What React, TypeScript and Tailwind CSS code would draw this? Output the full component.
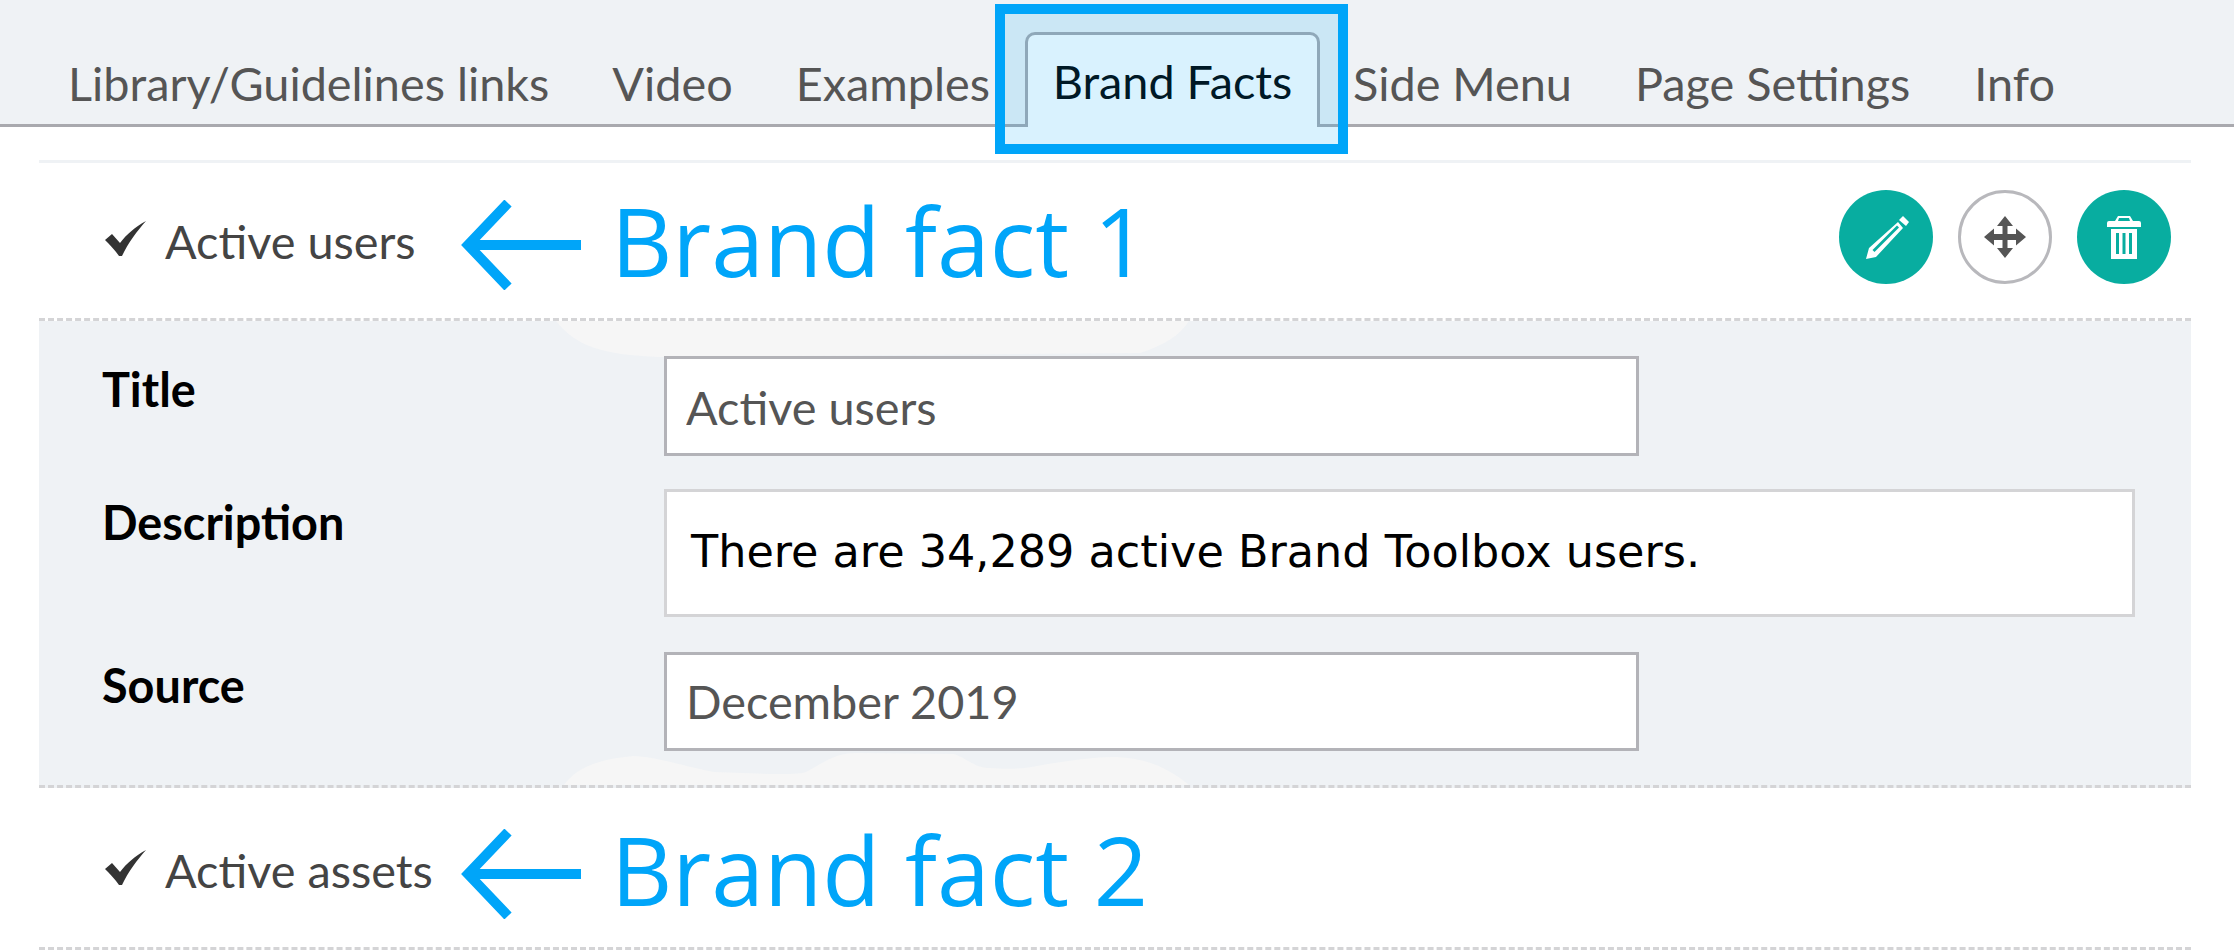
import type { ReactNode } from "react";

const leftTabs = [
  { label: "Library/Guidelines links", left: "ml-[68px]" },
  { label: "Video", left: "ml-[63px]" },
  { label: "Examples", left: "ml-[63px]" },
];

const rightTabs = [
  { label: "Side Menu", left: "ml-[33px]" },
  { label: "Page Settings", left: "ml-[63px]" },
  { label: "Info", left: "ml-[64px]" },
];

function BlueArrow() {
  return (
    <svg width="120" height="90" viewBox="0 0 120 90" className="shrink-0">
      <path d="M120 45H8" stroke="#00a5f9" strokeWidth="10" fill="none" />
      <path d="M47 3L7 45L47 87" stroke="#00a5f9" strokeWidth="10" fill="none" />
    </svg>
  );
}

function CheckMark() {
  return (
    <svg width="44" height="36" viewBox="0 0 44 36" className="mb-[4px] shrink-0" fill="#333">
      <path d="M2 19l7-6 8 9C24 13 32 6 43 0c-8 9-18 22-24 35h-3C12 29 7 24 2 19z" />
    </svg>
  );
}

function FactRow({ title, note, offset, children }: { title: string; note: string; offset: string; children?: ReactNode }) {
  return (
    <div className={`flex items-center pl-[64px] pr-[20px] ${offset}`}>
      <CheckMark />
      <span className="ml-[18px] w-[296px] pt-[2px] text-[46.8px] leading-none text-[#444]">{title}</span>
      <div className="mt-[8px]">
        <BlueArrow />
      </div>
      <span className="ml-[30px] font-['Open_Sans',sans-serif] text-[95px] leading-none text-[#00a5f9]">{note}</span>
      <div className="mb-[8px] ml-auto flex items-center gap-[25px]">{children}</div>
    </div>
  );
}

function Field({ label, children, top }: { label: string; children: ReactNode; top: string }) {
  return (
    <div className={`relative flex items-start ${top}`}>
      <div className="w-[625px] pt-[8px] pl-[63px] text-[46.8px] leading-[50px] font-bold text-black">{label}</div>
      {children}
    </div>
  );
}

export default function App() {
  return (
    <div className="relative h-[951px] w-[2234px] overflow-hidden bg-white font-['Lato',sans-serif]">
      {/* tab bar */}
      <div className="flex h-[127px] items-end border-b-[3px] border-[#a9a9ae] bg-[#eff2f5]">
        {leftTabs.map((t) => (
          <span key={t.label} className={`${t.left} mb-[16px] text-[46.8px] leading-[50px] text-[#555]`}>
            {t.label}
          </span>
        ))}
        <div className="relative top-[3px] ml-[35px] flex h-[95px] w-[295px] items-center justify-center rounded-t-[10px] border-[3px] border-b-0 border-[#a9a9ae] bg-white text-[46.8px] text-black">
          Brand Facts
        </div>
        {rightTabs.map((t) => (
          <span key={t.label} className={`${t.left} mb-[16px] text-[46.8px] leading-[50px] text-[#555]`}>
            {t.label}
          </span>
        ))}
      </div>

      <div className="mt-[33px] mr-[43px] ml-[39px] border-t-[3px] border-[#eff2f5]">
        <div className="flex h-[158px] items-center border-b-[3px] border-dashed border-[#d4d4d6]">
          <div className="w-full">
            <FactRow title="Active users" note="Brand fact 1" offset="">
              <button className="flex h-[94px] w-[94px] items-center justify-center rounded-full bg-[#08ada0]">
                <svg width="50" height="50" viewBox="0 0 50 50" fill="#fff">
                  <path d="M42 4L48 10L45 14L38 8Z" />
                  <path d="M37 10L42 16L15 45L5 47L8 36ZM36 13.500L38 15.500L13.500 40L11.500 38Z" fillRule="evenodd" />
                </svg>
              </button>
              <button className="flex h-[94px] w-[94px] items-center justify-center rounded-full border-[3px] border-[#b8b8bc] bg-white">
                <svg width="44" height="44" viewBox="0 0 44 44" fill="#555">
                  <path d="M22 1l8 10h-5.500v8H33v-5.500l10 8.500-10 8.500V25h-8.500v8H30l-8 10-8-10h5.500v-8H11v5.500L1 22l10-8.500V19h8.500v-8H14z" />
                </svg>
              </button>
              <button className="flex h-[94px] w-[94px] items-center justify-center rounded-full bg-[#08ada0]">
                <svg width="34" height="46" viewBox="0 0 34 46" fill="#fff">
                  <path d="M11 2h12l3 5h6a2 2 0 012 2v4H0V9a2 2 0 012-2h6zM12 4l-1 3h12l-1-3z" fillRule="evenodd" />
                  <path d="M4 15h26v30H4zM9 19v21h3V19zM15.500 19v21h3V19zM22 19v21h3V19z" fillRule="evenodd" />
                </svg>
              </button>
            </FactRow>
          </div>
        </div>

        <div className="relative h-[467px] border-b-[3px] border-dashed border-[#d4d4d6] bg-[#eff2f5] pt-[35px]">
          {/* faint watermark showing through the panel */}
          <svg className="absolute top-0 left-0 h-[464px] w-[2152px]" viewBox="39 321 2152 464" fill="#f6f6f6">
            <path d="M556 321C575 345 600 355 660 357L1140 353C1165 345 1180 335 1189 321Z" />
            <path d="M564 785C575 770 592 760 633 756C655 756 690 768 714 772L770 774C790 774 800 774 806 772C825 762 835 753 857 753L954 754C970 760 975 768 990 768C1000 769 1015 769 1025 768C1060 762 1090 757 1112 757C1140 757 1165 765 1189 785Z" />
          </svg>
          <Field label="Title" top="">
            <input
              readOnly
              value="Active users"
              className="h-[100px] w-[975px] border-[3px] border-[#b3b3b8] bg-white px-[19px] pt-[1px] text-[46.8px] text-[#555]"
            />
          </Field>
          <Field label="Description" top="mt-[33px]">
            <div className="h-[128px] w-[1471px] border-[3px] border-[#d4d4d6] bg-white px-[24px] pt-[35px] font-['DejaVu_Sans',sans-serif] text-[44.5px] leading-[50px] text-black">
              There are 34,289 active Brand Toolbox users.
            </div>
          </Field>
          <Field label="Source" top="mt-[35px]">
            <input
              readOnly
              value="December 2019"
              className="h-[99px] w-[975px] border-[3px] border-[#b3b3b8] bg-white px-[19px] pb-[2px] text-[46.8px] text-[#555]"
            />
          </Field>
        </div>

        <div className="flex h-[162px] items-center border-b-[3px] border-dashed border-[#d4d4d6]">
          <div className="w-full">
            <FactRow title="Active assets" note="Brand fact 2" offset="pt-[4px]" />
          </div>
        </div>
      </div>

      {/* highlight box drawn over the tab */}
      <div className="absolute top-[4px] left-[995px] h-[150px] w-[353px] border-[10px] border-[#00a5f9] bg-[#00a5f9]/15" />
    </div>
  );
}
